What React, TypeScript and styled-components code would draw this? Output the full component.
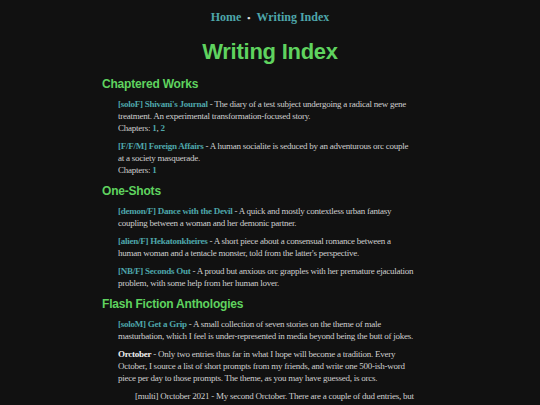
import React from "react";
import styled, { createGlobalStyle } from "styled-components";

const GlobalStyle = createGlobalStyle`
    html, body {
        margin: 0;
        padding: 0;
        background: #111111;
    }
    body {
        font-family: "Liberation Serif", "DejaVu Serif", serif;
        color: #cfcfcf;
    }
`;

const Page = styled.div`
    width: 336px;
    margin: 0 auto;
    padding-top: 10px;
`;

const Nav = styled.nav`
    text-align: center;
    font-size: 12px;
    font-weight: bold;
    line-height: 14px;
    a {
        color: #4ea6aa;
        text-decoration: none;
    }
`;

const Dot = styled.span`
    color: #e0e0e0;
    margin: 0 6px;
    font-size: 9px;
`;

const Title = styled.h1`
    font-family: "Liberation Sans", Arial, sans-serif;
    font-size: 22px;
    letter-spacing: -0.25px;
    color: #5fd35f;
    text-align: center;
    margin: 15px 0 11px;
    line-height: 24px;
`;

const Heading = styled.h2`
    font-family: "Liberation Sans", Arial, sans-serif;
    font-size: 12px;
    letter-spacing: -0.2px;
    color: #5fd35f;
    margin: 0;
    line-height: 16px;
    padding: 1px 0 6px;
`;

const Entry = styled.p<{ $nested?: boolean }>`
    font-size: 9px;
    letter-spacing: -0.25px;
    line-height: 12px;
    margin: 0 23px 6px ${(p) => (p.$nested ? "33px" : "16px")};
`;

const Link = styled.a`
    color: #4ea6aa;
    font-weight: bold;
    text-decoration: none;
`;

const Plain = styled.a`
    color: #cfcfcf;
    text-decoration: none;
`;

const Chapters = styled.span`
    display: block;
    a {
        color: #4ea6aa;
        font-weight: bold;
        text-decoration: none;
    }
`;

const Strong = styled.strong`
    color: #f0f0f0;
`;

export default function App() {
    return (
        <>
            <GlobalStyle />
            <Page>
                <Nav>
                    <a href="#">Home</a>
                    <Dot>•</Dot>
                    <a href="#">Writing Index</a>
                </Nav>
                <Title>Writing Index</Title>

                <Heading>Chaptered Works</Heading>
                <Entry>
                    <Link href="#">[soloF] Shivani's Journal</Link> - The diary of a test subject undergoing a radical new gene treatment. An experimental transformation-focused story.
                    <Chapters>
                        Chapters: <a href="#">1</a>, <a href="#">2</a>
                    </Chapters>
                </Entry>
                <Entry>
                    <Link href="#">[F/F/M] Foreign Affairs</Link> - A human socialite is seduced by an adventurous orc couple at a society masquerade.
                    <Chapters>
                        Chapters: <a href="#">1</a>
                    </Chapters>
                </Entry>

                <Heading>One-Shots</Heading>
                <Entry>
                    <Link href="#">[demon/F] Dance with the Devil</Link> - A quick and mostly contextless urban fantasy coupling between a woman and her demonic partner.
                </Entry>
                <Entry>
                    <Link href="#">[alien/F] Hekatonkheires</Link> - A short piece about a consensual romance between a human woman and a tentacle monster, told from the latter's perspective.
                </Entry>
                <Entry>
                    <Link href="#">[NB/F] Seconds Out</Link> - A proud but anxious orc grapples with her premature ejaculation problem, with some help from her human lover.
                </Entry>

                <Heading>Flash Fiction Anthologies</Heading>
                <Entry>
                    <Link href="#">[soloM] Get a Grip</Link> - A small collection of seven stories on the theme of male masturbation, which I feel is under-represented in media beyond being the butt of jokes.
                </Entry>
                <Entry>
                    <Strong>Orctober</Strong> - Only two entries thus far in what I hope will become a tradition. Every October, I source a list of short prompts from my friends, and write one 500-ish-word piece per day to those prompts. The theme, as you may have guessed, is orcs.
                </Entry>
                <Entry $nested>
                    <Plain href="#">[multi] Orctober 2021</Plain> - My second Orctober. There are a couple of dud entries, but overall I'm pretty happy with how it turned out.
                </Entry>
            </Page>
        </>
    );
}
